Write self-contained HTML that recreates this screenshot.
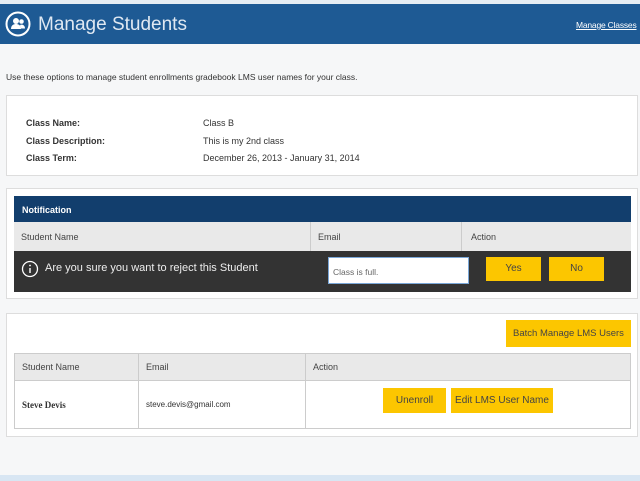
<!DOCTYPE html><html><head><style>
*{margin:0;padding:0;box-sizing:border-box}
body{width:640px;height:481px;background:#f6f7f8;font-family:"Liberation Sans",sans-serif;position:relative;overflow:hidden;color:#333}
.abs{position:absolute}
.hdr{left:0;top:4px;width:640px;height:40px;background:#1e5a94}
.box{background:#fff;border:1px solid #ddd}
.btn{position:absolute;background:#fcc600;color:#444;font-size:10px;text-align:center;white-space:nowrap}
td{border:1px solid #ccc;font-size:9px;padding-left:7px}
</style></head><body>
<div class="abs" style="left:0;top:0;width:640px;height:4px;background:#e6edf3"></div>
<div class="abs hdr"></div>
<svg class="abs" style="left:5px;top:11px" width="26" height="26" viewBox="0 0 26 26"><circle cx="13" cy="13" r="11.5" fill="none" stroke="#fff" stroke-width="2"/><circle cx="11" cy="10" r="3" fill="#fff"/><circle cx="16.5" cy="10.5" r="2.3" fill="#fff"/><path d="M6 18c0-4 3-5 5-5s5 1 5 5z" fill="#fff"/><path d="M15 14c2-1 5 0 5 3.5h-4z" fill="#fff"/></svg>
<div class="abs" style="left:38px;top:14px;font-size:19px;color:#dfe8f2">Manage Students</div>
<div class="abs" style="left:576px;top:20px;font-size:8.5px;letter-spacing:-0.2px;color:#fff;text-decoration:underline;white-space:nowrap">Manage Classes</div>
<div class="abs" style="left:6px;top:72px;font-size:8.5px;color:#333">Use these options to manage student enrollments gradebook LMS user names for your class.</div>
<div class="abs box" style="left:6px;top:95px;width:632px;height:81px"></div>
<div class="abs" style="left:26px;top:115px;font-size:9px;font-weight:bold;line-height:17.5px">Class Name:<br>Class Description:<br>Class Term:</div>
<div class="abs" style="left:203px;top:115px;font-size:9px;line-height:17.5px">Class B<br>This is my 2nd class<br>December 26, 2013 - January 31, 2014</div>
<div class="abs box" style="left:6px;top:188px;width:632px;height:111px"></div>
<div class="abs" style="left:14px;top:196px;width:617px;height:26px;background:#123e6d;color:#fff;font-size:9px;font-weight:bold;padding:9px 0 0 8px">Notification</div>
<div class="abs" style="left:14px;top:222px;width:617px;height:29px;background:#e9e9e9;font-size:9px;color:#444">
<span class="abs" style="left:7px;top:10px">Student Name</span><span class="abs" style="left:304px;top:10px">Email</span><span class="abs" style="left:457px;top:10px">Action</span>
<div class="abs" style="left:296px;top:0;width:1px;height:29px;background:#ccc"></div><div class="abs" style="left:447px;top:0;width:1px;height:29px;background:#ccc"></div></div>
<div class="abs" style="left:14px;top:251px;width:617px;height:41px;background:#333"></div>
<svg class="abs" style="left:21px;top:260px" width="18" height="18"><circle cx="9" cy="9" r="7.5" fill="none" stroke="#fff" stroke-width="1.3"/><rect x="8.3" y="8" width="1.4" height="5" fill="#fff"/><circle cx="9" cy="5.5" r="0.9" fill="#fff"/></svg>
<div class="abs" style="left:45px;top:262px;font-size:11px;color:#eee">Are you sure you want to reject this Student</div>
<div class="abs" style="left:328px;top:257px;width:141px;height:27px;background:#fff;border:1px solid #7aa7d8;font-size:8.5px;color:#666;padding:9px 0 0 4px">Class is full.</div>
<div class="btn" style="left:486px;top:257px;width:55px;height:24px;line-height:24px">Yes</div>
<div class="btn" style="left:549px;top:257px;width:55px;height:24px;line-height:24px">No</div>
<div class="abs box" style="left:6px;top:313px;width:632px;height:124px"></div>
<div class="btn" style="left:506px;top:320px;width:125px;height:27px;line-height:27px;font-size:9.5px">Batch Manage LMS Users</div>
<table class="abs" style="left:14px;top:353px;width:617px;border-collapse:collapse">
<tr style="height:27px;background:#e9e9e9;color:#444"><td style="width:124px">Student Name</td><td style="width:167px">Email</td><td>Action</td></tr>
<tr style="height:48px;background:#fff"><td style="font-weight:bold;font-family:'Liberation Serif',serif">Steve Devis</td><td style="font-size:8px">steve.devis@gmail.com</td><td></td></tr></table>
<div class="btn" style="left:383px;top:388px;width:63px;height:25px;line-height:25px">Unenroll</div>
<div class="btn" style="left:451px;top:388px;width:102px;height:25px;line-height:25px">Edit LMS User Name</div>
<div class="abs" style="left:0;top:475px;width:640px;height:6px;background:#d8e6f3"></div>
</body></html>
